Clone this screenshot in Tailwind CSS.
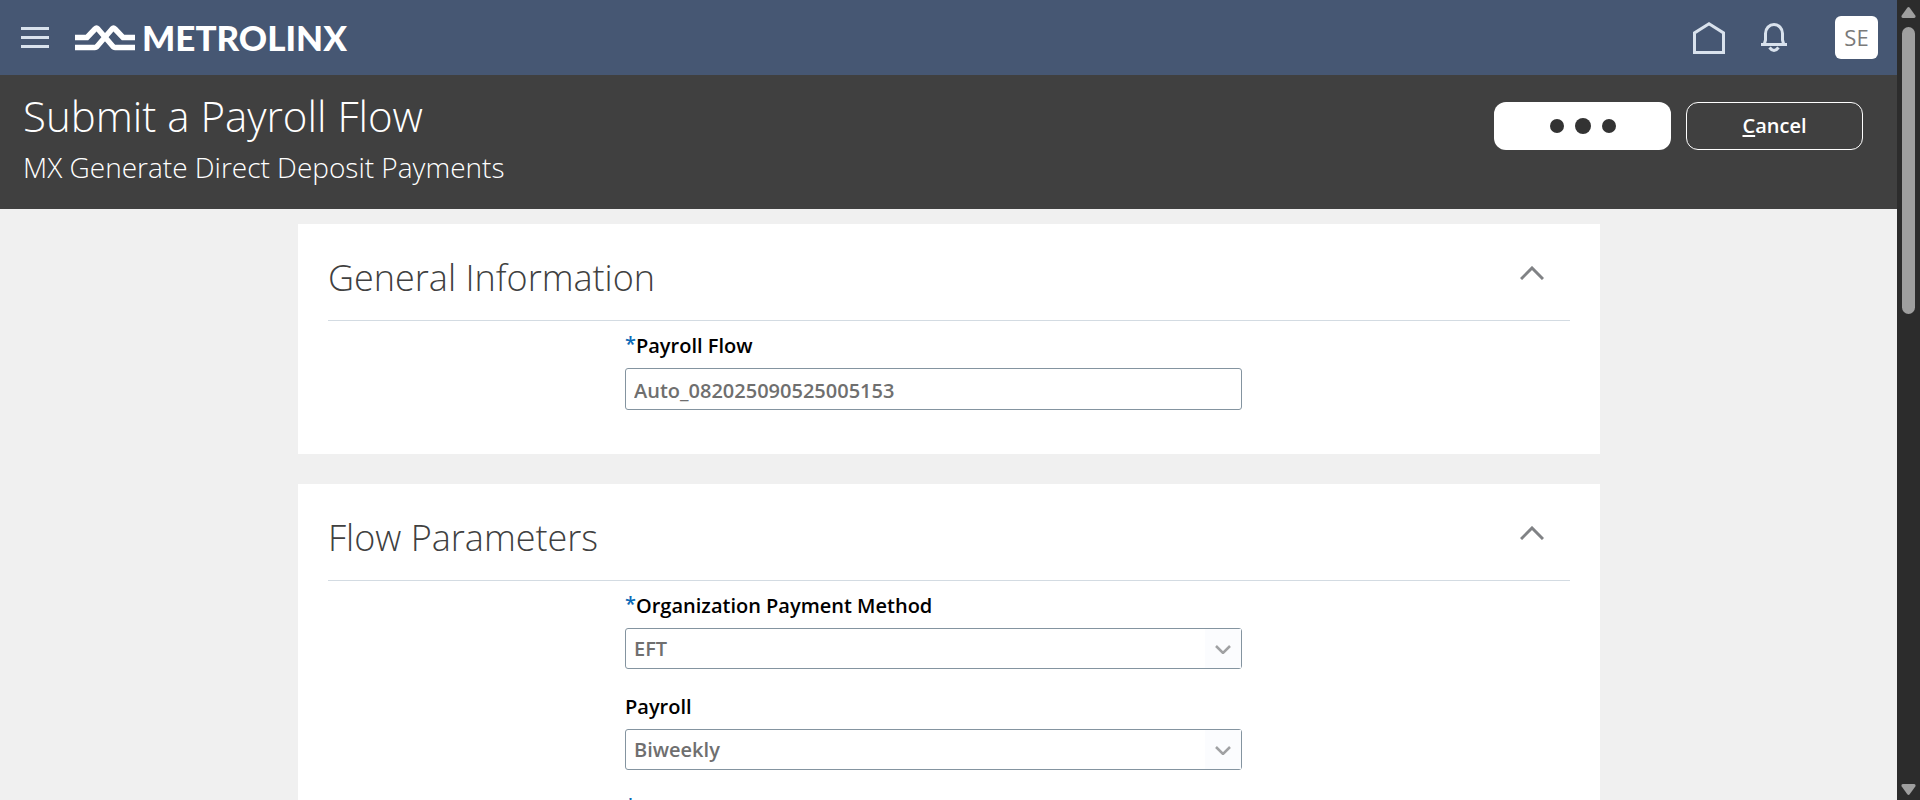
<!DOCTYPE html>
<html lang="en">
<head>
<meta charset="utf-8">
<title>Submit a Payroll Flow</title>
<script src="https://cdn.jsdelivr.net/npm/@tailwindcss/browser@4"></script>
</head>
<body class="bg-[#f0f0f0] font-['Open_Sans',sans-serif]">
<div class="flex h-screen">
  <div class="flex min-w-0 flex-1 flex-col overflow-hidden">
    <header class="flex h-[75px] shrink-0 items-center bg-[#465773] pl-[21px] pr-[19px]">
      <button type="button" aria-label="Navigator" class="flex w-7 flex-col gap-[6px]">
        <span class="h-[3px] w-full bg-[#d9e2ed]"></span>
        <span class="h-[3px] w-full bg-[#d9e2ed]"></span>
        <span class="h-[3px] w-full bg-[#d9e2ed]"></span>
      </button>
      <a href="#" class="ml-[26px] flex items-center gap-[7px] text-white">
        <svg class="h-[26px] w-[60px]" viewBox="0 0 60 26" fill="none" stroke="currentColor" stroke-width="5.500">
          <path d="M0 12.500H12L20 4Q21.500 2.500 23 4L38 21.500Q39 22.500 40 22.500H60"/>
          <path d="M0 22.500H20Q21 22.500 22 21.500L37 4Q38.500 2.500 40 4L48 12.500H60"/>
        </svg>
        <span class="font-['Lato'] text-[35px] leading-none font-black">METROLINX</span>
      </a>
      <nav class="ml-auto flex items-center">
        <a href="#" aria-label="Home"><svg class="h-8 w-8" viewBox="0 0 32 32" fill="none" stroke="#d9e2ed" stroke-width="3"><path d="M1.500 30.500V10.900L16 1.800L30.500 10.900V30.500Z"/></svg></a>
        <button type="button" aria-label="Notifications" class="ml-9"><svg class="h-[30px] w-[26px]" viewBox="0 0 26 30" fill="none" stroke="#d9e2ed" stroke-width="3"><path d="M0 21.500H26M3.500 20.500L4.500 17V10.500A8.500 9 0 0 1 21.500 10.500V17L22.500 20.500"/><path d="M8.500 24.500Q13 30.500 17.500 24.500"/></svg></button>
        <button type="button" aria-label="User SE" class="ml-12 flex h-[43px] w-[43px] items-center justify-center rounded-md bg-white text-[22px] text-[#7a7a7a]">SE</button>
      </nav>
    </header>

    <div class="flex h-[134px] shrink-0 items-start justify-between bg-[#404040] pl-[23px] pr-[34px] text-white">
      <div>
        <h1 class="pt-[10px] text-[42px] leading-[62px] font-light">Submit a Payroll Flow</h1>
        <p class="text-[28px] leading-10 font-light">MX Generate Direct Deposit Payments</p>
      </div>
      <div class="mt-[27px] flex gap-[15px]">
        <button type="button" aria-label="Submitting" class="flex h-12 w-[177px] items-center justify-center gap-[11px] rounded-xl bg-white">
          <span class="h-[14px] w-[14px] rounded-full bg-[#333]"></span>
          <span class="h-4 w-4 rounded-full bg-[#333]"></span>
          <span class="h-[14px] w-[14px] rounded-full bg-[#333]"></span>
        </button>
        <button type="button" class="h-12 w-[177px] rounded-xl border border-white text-xl font-semibold"><span class="underline decoration-2 underline-offset-2">C</span>ancel</button>
      </div>
    </div>

    <main class="flex flex-col gap-[30px] pt-[15px] pr-[297px] pl-[298px]">
      <section class="shrink-0 bg-white px-[30px] pb-11">
        <div class="flex h-[97px] items-center justify-between border-b border-[#d3dbe2]">
          <h2 class="pt-3 text-4xl font-light text-[#404040]">General Information</h2>
          <button type="button" aria-label="Collapse General Information" class="mr-[26px] pt-[2px]"><svg class="h-[14px] w-[24px]" viewBox="0 0 24 14" fill="none" stroke="#808285" stroke-width="3"><path d="M1 13L12 2L23 13"/></svg></button>
        </div>
        <div class="grid grid-cols-[297fr_617fr_328fr]">
          <div class="col-start-2 flex flex-col">
            <label for="flow" class="flex h-[47px] items-center pt-[2px] text-xl font-semibold text-black"><span class="pb-1 text-[#0b6ab7]">*</span>Payroll Flow</label>
            <input id="flow" type="text" value="Auto_082025090525005153" class="h-[42px] rounded-[3px] border border-[#8494a0] bg-white px-2 pt-[2px] text-xl font-semibold text-[#6f6f6f]">
          </div>
        </div>
      </section>

      <section class="shrink-0 bg-white px-[30px]">
        <div class="flex h-[97px] items-center justify-between border-b border-[#d3dbe2]">
          <h2 class="pt-3 text-4xl font-light text-[#404040]">Flow Parameters</h2>
          <button type="button" aria-label="Collapse Flow Parameters" class="mr-[26px] pt-[2px]"><svg class="h-[14px] w-[24px]" viewBox="0 0 24 14" fill="none" stroke="#808285" stroke-width="3"><path d="M1 13L12 2L23 13"/></svg></button>
        </div>
        <div class="grid grid-cols-[297fr_617fr_328fr]">
          <div class="col-start-2 flex flex-col gap-[13px]">
            <div>
              <label for="method" class="flex h-[47px] items-center pt-[2px] text-xl font-semibold text-black"><span class="pb-1 text-[#0b6ab7]">*</span>Organization Payment Method</label>
              <div class="grid">
                <select id="method" class="col-start-1 row-start-1 h-[41px] appearance-none rounded-[3px] border border-[#8494a0] bg-white px-2 text-xl font-semibold text-[#6f6f6f]"><option>EFT</option></select>
                <span class="pointer-events-none col-start-1 row-start-1 m-px flex w-9 items-center justify-center justify-self-end bg-[#fbfcfe] pt-[2px]"><svg class="h-[9px] w-4" viewBox="0 0 16 9" fill="none" stroke="#a0a1a3" stroke-width="2.500"><path d="M1 1L8 8L15 1"/></svg></span>
              </div>
            </div>
            <div>
              <label for="payroll" class="flex h-[47px] items-center pt-[2px] text-xl font-semibold text-black">Payroll</label>
              <div class="grid">
                <select id="payroll" class="col-start-1 row-start-1 h-[41px] appearance-none rounded-[3px] border border-[#8494a0] bg-white px-2 text-xl font-semibold text-[#6f6f6f]"><option>Biweekly</option></select>
                <span class="pointer-events-none col-start-1 row-start-1 m-px flex w-9 items-center justify-center justify-self-end bg-[#fbfcfe] pt-[2px]"><svg class="h-[9px] w-4" viewBox="0 0 16 9" fill="none" stroke="#a0a1a3" stroke-width="2.500"><path d="M1 1L8 8L15 1"/></svg></span>
              </div>
            </div>
            <div class="flex h-[47px] items-center pt-[2px] text-xl font-semibold text-[#0b6ab7]"><span class="pb-1">*</span></div>
          </div>
        </div>
      </section>
    </main>
  </div>

  <div aria-hidden="true" class="flex w-[23px] shrink-0 flex-col items-center bg-[#2c2c2c] pt-[7px] pb-[5px]">
    <svg class="h-[11px] w-[15px]" viewBox="0 0 15 11" fill="#9f9f9f"><path d="M6.300 .8Q7.500 -.6 8.700 .8L14.300 8.600Q15.200 10.600 13.200 11H1.800Q-.2 10.600 .7 8.600Z"/></svg>
    <span class="mt-[9px] h-[287px] w-[13px] rounded-full bg-[#9f9f9f]"></span>
    <svg class="mt-auto h-[12px] w-[15px]" viewBox="0 0 15 12" fill="#9f9f9f"><path d="M6.300 11.200Q7.500 12.600 8.700 11.200L14.300 3.400Q15.200 1.400 13.200 1H1.800Q-.2 1.400 .7 3.400Z"/></svg>
  </div>
</div>
</body>
</html>
